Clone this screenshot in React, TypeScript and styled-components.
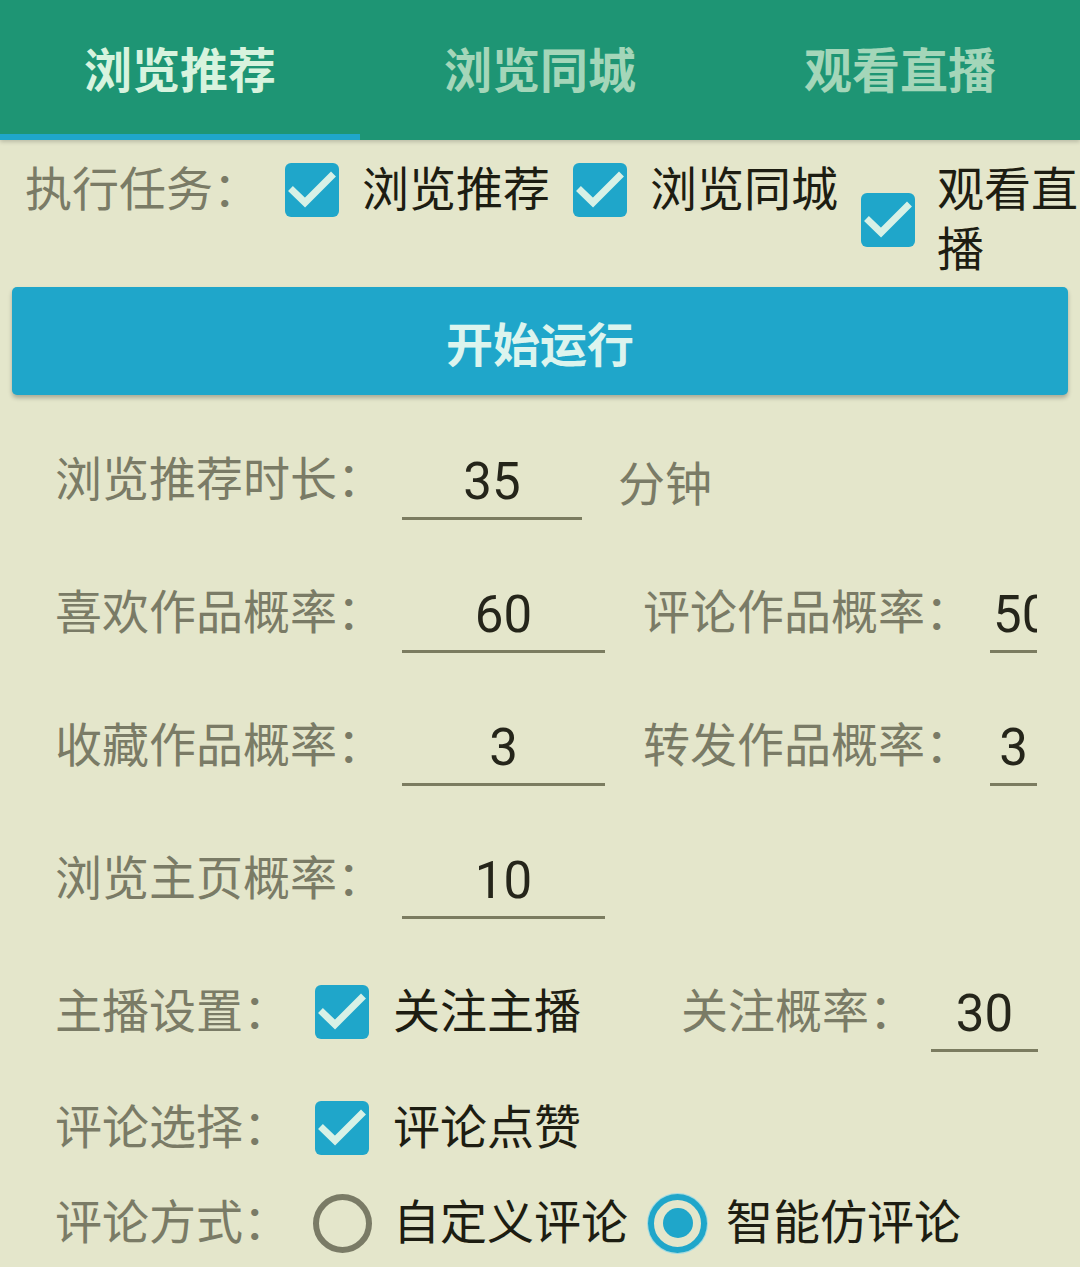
import React, { useState } from "react";
import styled, { createGlobalStyle } from "styled-components";

const GREEN = "#1e9574";
const BLUE = "#1fa6ca";
const BG = "#e4e6cb";
const LABEL = "#7a7b66";
const INK = "#1d1d12";

const GlobalStyle = createGlobalStyle`
  html, body {
    margin: 0;
    padding: 0;
    background: ${BG};
  }
  body {
    font-family: Roboto, "Noto Sans CJK SC", sans-serif;
  }
`;

const Page = styled.div`
  width: 1080px;
  height: 1267px;
  overflow: hidden;
  background: ${BG};
`;

const TabBar = styled.div`
  display: grid;
  grid-template-columns: repeat(3, 1fr);
  height: 140px;
  background: ${GREEN};
  box-shadow: 0 2px 4px rgba(0, 0, 0, 0.18);
  position: relative;
`;

const Tab = styled.div<{ $active?: boolean }>`
  display: flex;
  align-items: center;
  justify-content: center;
  box-sizing: border-box;
  border-bottom: 6px solid ${(p) => (p.$active ? BLUE : "transparent")};
  font-size: 48px;
  font-weight: 700;
  color: ${(p) => (p.$active ? "#d7f3de" : "#a4d6b9")};
  cursor: pointer;
`;

const TaskRow = styled.div`
  display: flex;
  align-items: flex-start;
  margin-top: 20px;
  padding-left: 25px;
  height: 120px;
`;

const Label = styled.div<{ $width: number }>`
  flex: 0 0 ${(p) => p.$width}px;
  font-size: 47px;
  line-height: 60px;
  color: ${LABEL};
  white-space: nowrap;
`;

const Option = styled.label<{ $fill?: boolean; $gap?: number; $after?: number }>`
  display: flex;
  align-items: center;
  gap: ${(p) => p.$gap ?? 23}px;
  flex: ${(p) => (p.$fill ? "1 1 0" : "0 0 auto")};
  min-width: 0;
  margin-right: ${(p) => p.$after ?? 0}px;
  cursor: pointer;
`;

const OptionText = styled.span`
  font-size: 47px;
  line-height: 60px;
  color: ${INK};
  min-width: 0;
`;

const Box = styled.span`
  flex: 0 0 54px;
  width: 54px;
  height: 54px;
  border-radius: 6px;
  background: ${BLUE};
  display: flex;
  align-items: center;
  justify-content: center;
`;

const Ring = styled.span<{ $on?: boolean }>`
  flex: 0 0 59px;
  width: 59px;
  height: 59px;
  box-sizing: border-box;
  border-radius: 50%;
  border: 6px solid ${(p) => (p.$on ? BLUE : LABEL)};
  box-shadow: ${(p) => (p.$on ? "0 0 0 1px #9fdbe6" : "none")};
  display: flex;
  align-items: center;
  justify-content: center;
`;

const Dot = styled.span`
  width: 30px;
  height: 30px;
  border-radius: 50%;
  background: ${BLUE};
`;

const StartButton = styled.button`
  display: block;
  box-sizing: border-box;
  width: calc(100% - 24px);
  margin: 7px 12px 0;
  height: 108px;
  border: none;
  border-radius: 5px;
  background: ${BLUE};
  box-shadow: 0 3px 4px rgba(0, 0, 0, 0.25);
  font-family: inherit;
  font-size: 47px;
  font-weight: 700;
  color: #dcf4ee;
  cursor: pointer;
`;

const Form = styled.div`
  display: flex;
  flex-direction: column;
  padding-left: 55px;
`;

const FormRow = styled.div<{ $top: number }>`
  display: flex;
  align-items: center;
  height: 80px;
  margin-top: ${(p) => p.$top}px;
`;

const Field = styled.div<{ $width: number; $clip?: boolean }>`
  flex: 0 0 ${(p) => p.$width}px;
  height: 80px;
  box-sizing: border-box;
  padding-top: 6px;
  padding-left: ${(p) => (p.$clip ? 3 : 0)}px;
  display: flex;
  align-items: center;
  justify-content: ${(p) => (p.$clip ? "flex-start" : "center")};
  border-bottom: 3px solid #7b7c60;
  overflow: hidden;
  white-space: nowrap;
  font-family: Roboto, sans-serif;
  font-size: 51px;
  color: #25251a;
`;

const Unit = styled.span<{ $left: number }>`
  margin-left: ${(p) => p.$left}px;
  font-size: 47px;
  color: ${LABEL};
`;

const Spacer = styled.span<{ $w: number }>`
  flex: 0 0 ${(p) => p.$w}px;
`;

const Check = () => (
  <svg width="54" height="54" viewBox="0 0 54 54">
    <path
      d="M8 28 L20 39.5 L46 13.5"
      fill="none"
      stroke="#d8f1e6"
      strokeWidth="7"
      strokeLinecap="square"
    />
  </svg>
);

const CheckItem = ({
  text,
  fill,
  gap,
  after,
}: {
  text: string;
  fill?: boolean;
  gap?: number;
  after?: number;
}) => (
  <Option $fill={fill} $gap={gap} $after={after}>
    <Box>
      <Check />
    </Box>
    <OptionText>{text}</OptionText>
  </Option>
);

const tabs = ["浏览推荐", "浏览同城", "观看直播"];

export default function App() {
  const [tab, setTab] = useState(0);
  const [mode, setMode] = useState(1);

  return (
    <Page>
      <GlobalStyle />
      <TabBar>
        {tabs.map((t, i) => (
          <Tab key={t} $active={i === tab} onClick={() => setTab(i)}>
            {t}
          </Tab>
        ))}
      </TabBar>

      <TaskRow>
        <Label $width={260}>执行任务：</Label>
        <CheckItem text="浏览推荐" after={23} />
        <CheckItem text="浏览同城" after={23} />
        <CheckItem text="观看直播" fill gap={22} />
      </TaskRow>

      <StartButton>开始运行</StartButton>

      <Form>
        <FormRow $top={45}>
          <Label $width={347}>浏览推荐时长：</Label>
          <Field $width={180}>35</Field>
          <Unit $left={36}>分钟</Unit>
        </FormRow>

        <FormRow $top={53}>
          <Label $width={347}>喜欢作品概率：</Label>
          <Field $width={203}>60</Field>
          <Spacer $w={38} />
          <Label $width={347}>评论作品概率：</Label>
          <Field $width={47} $clip>
            50
          </Field>
        </FormRow>

        <FormRow $top={53}>
          <Label $width={347}>收藏作品概率：</Label>
          <Field $width={203}>3</Field>
          <Spacer $w={38} />
          <Label $width={347}>转发作品概率：</Label>
          <Field $width={47}>3</Field>
        </FormRow>

        <FormRow $top={53}>
          <Label $width={347}>浏览主页概率：</Label>
          <Field $width={203}>10</Field>
        </FormRow>

        <FormRow $top={53}>
          <Label $width={260}>主播设置：</Label>
          <CheckItem text="关注主播" gap={24} />
          <Spacer $w={100} />
          <Label $width={250}>关注概率：</Label>
          <Field $width={107}>30</Field>
        </FormRow>

        <FormRow $top={36}>
          <Label $width={260}>评论选择：</Label>
          <CheckItem text="评论点赞" gap={24} />
        </FormRow>

        <FormRow $top={15}>
          <Label $width={258}>评论方式：</Label>
          <Option $gap={21} $after={20} onClick={() => setMode(0)}>
            <Ring $on={mode === 0}>{mode === 0 && <Dot />}</Ring>
            <OptionText>自定义评论</OptionText>
          </Option>
          <Option $gap={19} onClick={() => setMode(1)}>
            <Ring $on={mode === 1}>{mode === 1 && <Dot />}</Ring>
            <OptionText>智能仿评论</OptionText>
          </Option>
        </FormRow>
      </Form>
    </Page>
  );
}
